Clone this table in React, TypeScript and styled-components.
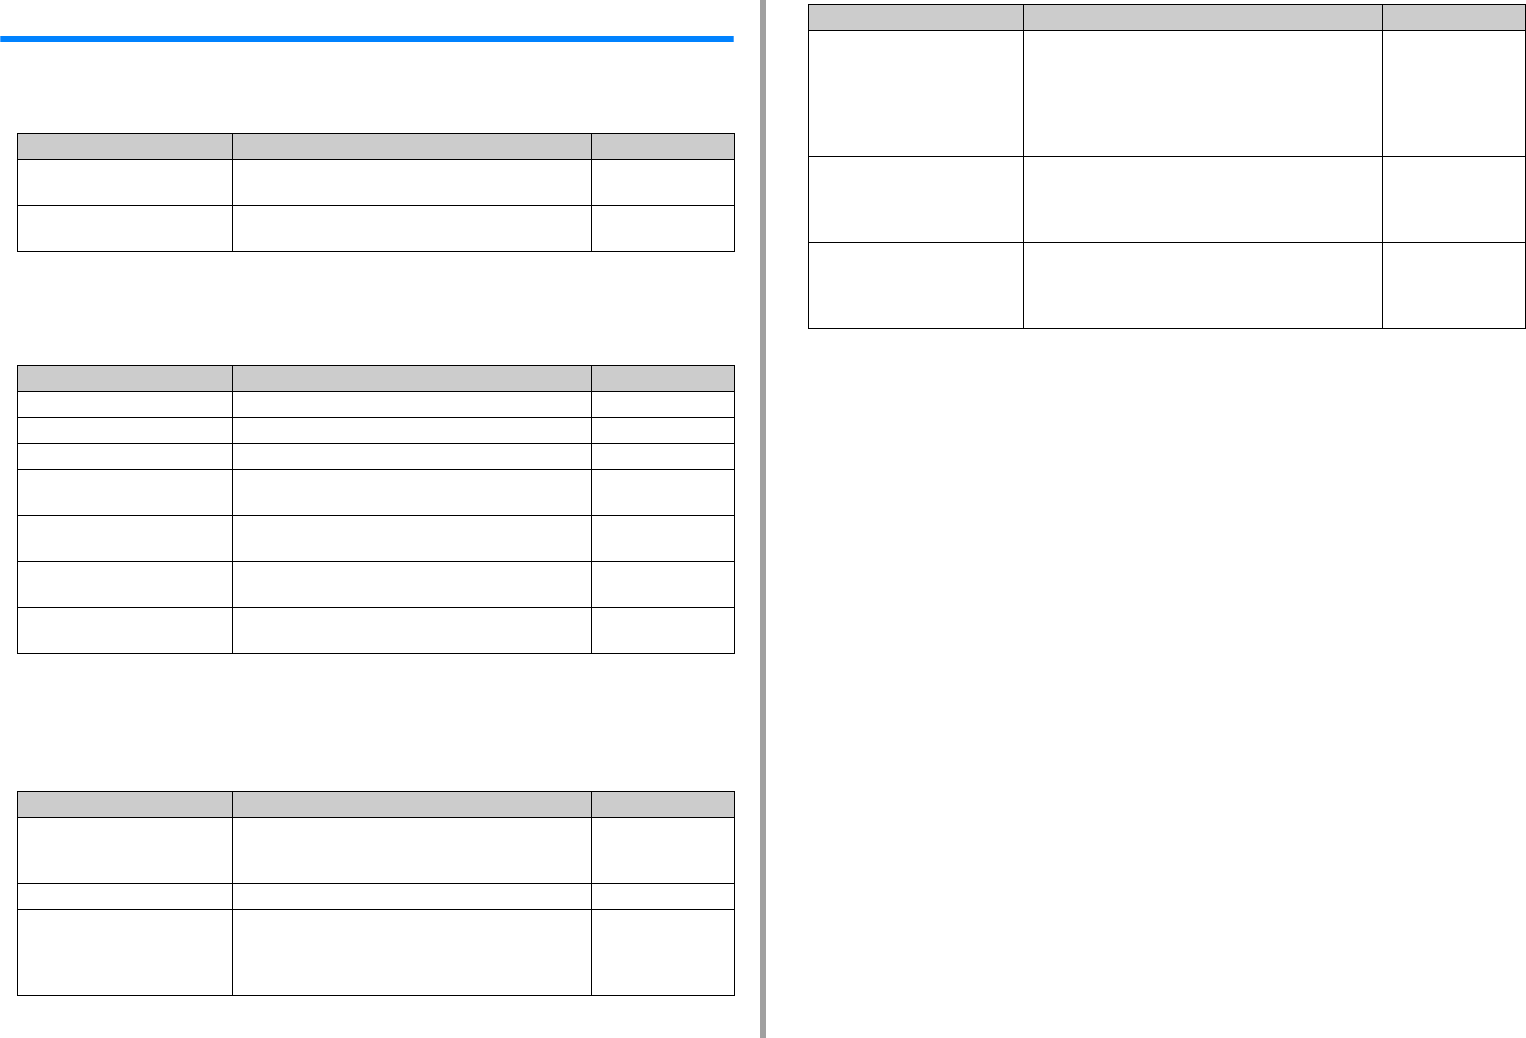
import React, { FC } from 'react';
import styled, { createGlobalStyle } from 'styled-components';

const GlobalStyle = createGlobalStyle`
  html, body {
    margin: 0;
    padding: 0;
    background: #ffffff;
    font-family: 'Liberation Sans', Arial, sans-serif;
  }
`;

const Page = styled.div`
  display: flex;
  min-height: 100vh;
  width: 1526px;
`;

const LeftPane = styled.div`
  width: 760px;
  display: flex;
  flex-direction: column;
`;

const RightPane = styled.div`
  flex: 1;
  padding: 4px 0 0 42px;
`;

const Divider = styled.div`
  width: 6px;
  background: #a0a0a0;
`;

const TitleBar = styled.div`
  margin-top: 36px;
  width: 734px;
  height: 6px;
  background: #0082ff;
  border-left: 1px solid #4ea6ff;
  border-right: 1px solid #4ea6ff;
  box-sizing: border-box;
`;

const Section = styled.div<{ gap: number }>`
  margin-top: ${p => p.gap}px;
  padding-left: 17px;
`;

const Grid = styled.div`
  display: grid;
  grid-template-columns: 215px 359px 143px;
  width: 718px;
  border-top: 1px solid #000;
  border-left: 1px solid #000;
  box-sizing: border-box;
`;

const Cell = styled.div<{ h: number; head?: boolean }>`
  height: ${p => p.h}px;
  box-sizing: border-box;
  border-right: 1px solid #000;
  border-bottom: 1px solid #000;
  background: ${p => (p.head ? '#cccccc' : '#ffffff')};
  font-size: 13px;
  color: #000;
`;

interface TableProps {
  rows: number[];
}

const SettingsTable: FC<TableProps> = ({ rows }) => (
  <Grid>
    {[0, 1, 2].map(i => (
      <Cell key={`h${i}`} h={26} head />
    ))}
    {rows.map((h, r) =>
      [0, 1, 2].map(c => <Cell key={`${r}-${c}`} h={h} />)
    )}
  </Grid>
);

const App: FC = () => (
  <React.Fragment>
    <GlobalStyle />
    <Page>
      <LeftPane>
        <TitleBar />
        <Section gap={91}>
          <SettingsTable rows={[46, 46]} />
        </Section>
        <Section gap={113}>
          <SettingsTable rows={[26, 26, 26, 46, 46, 46, 46]} />
        </Section>
        <Section gap={137}>
          <SettingsTable rows={[66, 26, 86]} />
        </Section>
      </LeftPane>
      <Divider />
      <RightPane>
        <SettingsTable rows={[126, 86, 86]} />
      </RightPane>
    </Page>
  </React.Fragment>
);

export default App;
